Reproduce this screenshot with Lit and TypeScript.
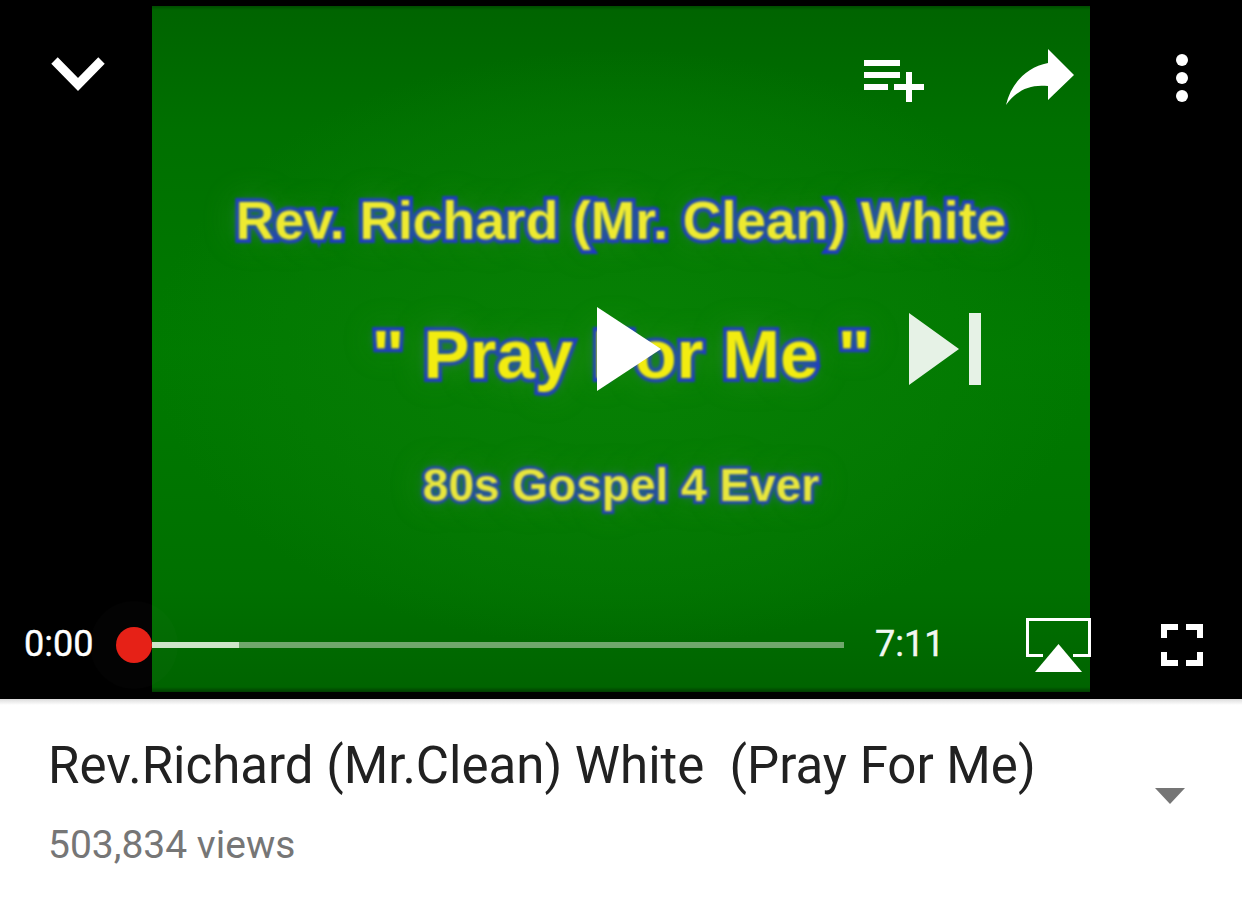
import { LitElement, html, css, svg } from "lit";
import { customElement } from "lit/decorators.js";

@customElement("app-root")
export class AppRoot extends LitElement {
  static styles = css`
    :host { display: block; width: 1242px; height: 900px; background: #fff; overflow: hidden; font-family: Roboto, "Liberation Sans", sans-serif; }
    .player { position: relative; height: 699px; background: #000; display: flex; justify-content: center; align-items: flex-start; padding: 6px 0 0 0; box-sizing: border-box; }
    .frame {
      width: 938px; height: 686px; box-sizing: border-box; padding-top: 185px;
      display: flex; flex-direction: column; align-items: center;
      background:
        radial-gradient(ellipse 470px 300px at 50% 50%, rgba(8,130,5,.85) 0%, rgba(6,124,4,.7) 60%, rgba(0,110,0,0) 100%),
        linear-gradient(#004c00 0, #006400 4px, #007000 18%, #007a00 50%, #007000 85%, #006400 calc(100% - 5px), #003c00 100%);
      font-family: "Liberation Sans", Arial, sans-serif; font-weight: 700; color: #ecea22;
    }
    .frame div { white-space: pre; filter: blur(1.1px); paint-order: stroke fill; -webkit-text-stroke: 8px #1c30d8; text-shadow: 0 0 6px #1f5a90, 0 0 12px #2e6a70, 0 0 34px rgba(130,190,90,.4); }
    .l1 { font-size: 53.4px; line-height: 60px; color: #eeea30; }
    .l2 { font-size: 69px; line-height: 76px; margin-top: 66px; color: #f2ec10; }
    .frame .l3 { font-size: 46px; line-height: 50px; margin-top: 67px; color: #e8e63c; -webkit-text-stroke: 6px #2438c8; }
    .icon { position: absolute; left: 0; top: 0; width: 1242px; height: 699px; pointer-events: none; }
    .halo { position: absolute; left: 90px; top: 601px; width: 88px; height: 88px; border-radius: 50%; background: rgba(255,255,255,.012); }
    .track { position: absolute; left: 152px; top: 642px; width: 692px; height: 6px; background: #6fa76b; }
    .buffer { height: 100%; background: #cde5c9; }
    .knob { position: absolute; left: 116px; top: 627px; width: 36px; height: 36px; border-radius: 50%; background: #e62117; }
    .time { position: absolute; top: 622px; font-size: 36px; line-height: 44px; color: #fff; -webkit-text-stroke: .4px currentColor; }
    .cur { left: 24px; }
    .dur { left: 875px; color: #f2f7f1; }
    .info { position: relative; padding: 37px 48px 0; }
    .info::before { content: ""; position: absolute; left: 0; right: 0; top: 0; height: 6px; background: linear-gradient(#dcdcdc, #fff); }
    .title { font-size: 51px; line-height: 60px; color: #212121; white-space: pre; }
    .views { font-size: 39px; line-height: 44px; color: #767676; margin-top: 27px; }
    .caret { position: absolute; left: 1155px; top: 89px; width: 30px; height: 16px; }
  `;

  private icons() {
    return svg`
      <polyline points="54.5,60.5 78,84.5 101.5,60.5" fill="none" stroke="#fff" stroke-width="9"/>
      <path fill="#fff" d="M864 60h36v6h-36zM864 72h36v6h-36zM864 84h24v6h-24zM894 84h12V72h6v12h12v6h-12v12h-6V90h-12z"/>
      <path fill="#fff" d="M1048 49 L1074 75 L1048 100 V86 C1030 84 1017 90 1006 105 C1011 84 1026 67 1048 63 Z"/>
      <circle cx="1182" cy="60" r="6" fill="#fff"/><circle cx="1182" cy="78" r="6" fill="#fff"/><circle cx="1182" cy="96" r="6" fill="#fff"/>
      <polygon points="597,307 661,349 597,391" fill="#fff"/>
      <path fill="#fff" fill-opacity=".9" d="M909 313 L959 349 L909 385 Z M969 313 h12 v72 h-12 Z"/>
      <path fill="none" stroke="#fff" stroke-width="3" d="M1043 655.500 H1027.500 V619.500 H1089.500 V655.500 H1073"/>
      <polygon points="1058.500,644 1082,672 1035,672" fill="#fff"/>
      <path fill="none" stroke="#fff" stroke-width="6" d="M1164 638V627H1178M1186 627H1200V638M1200 652V663H1186M1178 663H1164V652"/>
    `;
  }

  render() {
    return html`
      <section class="player">
        <div class="frame">
          <div class="l1">Rev. Richard (Mr. Clean) White</div>
          <div class="l2">" Pray For Me "</div>
          <div class="l3">80s Gospel 4 Ever</div>
        </div>
        <div class="halo"></div>
        <div class="track"><div class="buffer" style="width:${(87 / 692) * 100}%"></div></div>
        <div class="knob"></div>
        <span class="time cur">0:00</span>
        <span class="time dur">7:11</span>
        <svg class="icon" viewBox="0 0 1242 699">${this.icons()}</svg>
      </section>
      <section class="info">
        <div class="title">Rev.Richard (Mr.Clean) White  (Pray For Me)</div>
        <div class="views">503,834 views</div>
        <svg class="caret" viewBox="0 0 30 16"><polygon points="0,0 30,0 15,16" fill="#757575"/></svg>
      </section>
    `;
  }
}
